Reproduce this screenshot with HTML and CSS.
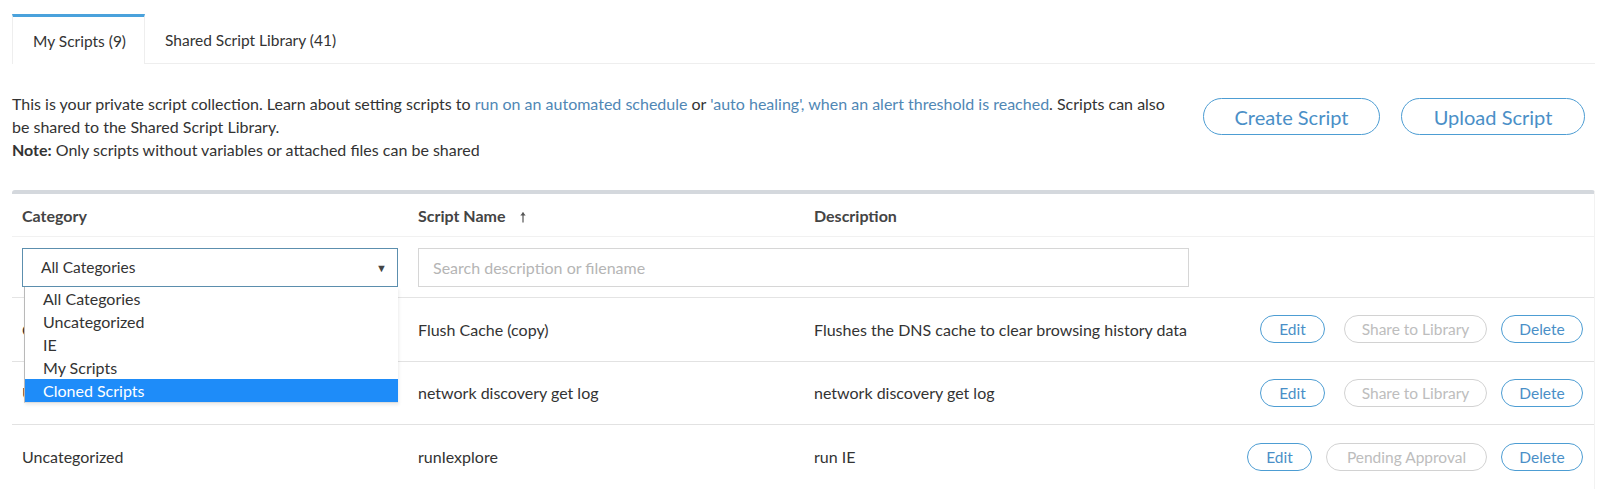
FILE: index.html
```html
<!DOCTYPE html>
<html lang="en">
<head>
<meta charset="utf-8">
<title>Scripts</title>
<link rel="stylesheet" href="styles.css">
</head>
<body>
<div class="page">
  <div class="tabs">
    <div class="tab active">My Scripts (9)</div>
    <div class="tab">Shared Script Library (41)</div>
  </div>

  <div class="intro">
    <div class="intro-text">
      This is your private script collection. Learn about setting scripts to <a href="#">run on an automated schedule</a> or <a href="#">'auto healing', when an alert threshold is reached</a>. Scripts can also<br>
      be shared to the Shared Script Library.<br>
      <b>Note:</b> Only scripts without variables or attached files can be shared
    </div>
    <div class="intro-actions">
      <button class="pill big create">Create Script</button>
      <button class="pill big upload">Upload Script</button>
    </div>
  </div>

  <div class="table">
    <div class="row head">
      <div class="cell">Category</div>
      <div class="cell">Script Name
        <svg class="sort" width="8" height="12" viewBox="0 0 8 12"><path d="M4 1.5V11.5" stroke="#555" stroke-width="1.2" fill="none"/><path d="M1.3 4.5L4 1.2L6.7 4.5Z" fill="#555"/></svg>
      </div>
      <div class="cell">Description</div>
      <div class="cell"></div>
    </div>

    <div class="row filter">
      <div class="cell select-cell">
        <div class="select">
          <span>All Categories</span>
          <span class="caret">&#9660;</span>
        </div>
        <ul class="options">
          <li>All Categories</li>
          <li>Uncategorized</li>
          <li>IE</li>
          <li>My Scripts</li>
          <li class="hl">Cloned Scripts</li>
        </ul>
      </div>
      <div class="cell search-cell">
        <div class="search">Search description or filename</div>
      </div>
    </div>

    <div class="row body">
      <div class="cell">Cloned Scripts</div>
      <div class="cell">Flush Cache (copy)</div>
      <div class="cell">Flushes the DNS cache to clear browsing history data</div>
      <div class="cell actions">
        <button class="pill sm edit wide-gap">Edit</button>
        <button class="pill sm off share">Share to Library</button>
        <button class="pill sm del">Delete</button>
      </div>
    </div>

    <div class="row body">
      <div class="cell">Uncategorized</div>
      <div class="cell">network discovery get log</div>
      <div class="cell">network discovery get log</div>
      <div class="cell actions">
        <button class="pill sm edit wide-gap">Edit</button>
        <button class="pill sm off share">Share to Library</button>
        <button class="pill sm del">Delete</button>
      </div>
    </div>

    <div class="row body last">
      <div class="cell">Uncategorized</div>
      <div class="cell">runIexplore</div>
      <div class="cell">run IE</div>
      <div class="cell actions">
        <button class="pill sm edit">Edit</button>
        <button class="pill sm off pending">Pending Approval</button>
        <button class="pill sm del">Delete</button>
      </div>
    </div>
  </div>
</div>
</body>
</html>
```

FILE: styles.css
```css
* { box-sizing: border-box; }
html, body { margin: 0; padding: 0; background: #fff; }
body {
  font-family: Lato, "Open Sans", sans-serif;
  color: #333;
  font-size: 16px;
}
.page {
  padding: 14px 8px 0 12px;
  height: 490px;
  overflow: hidden;
}
.tabs {
  display: flex;
  border-bottom: 1px solid #eee;
  height: 50px;
}
.tab {
  padding: 0 20px;
  display: flex;
  align-items: center;
  font-size: 15.5px;
  color: #333;
  white-space: nowrap;
  border-top: 3px solid transparent;
}
.tab.active {
  padding: 0 18px 0 20px;
  border-top-color: #4aa2dc;
  border-left: 1px solid #eee;
  border-right: 1px solid #eee;
  margin-bottom: -1px;
  background: #fff;
}
.intro {
  display: flex;
  align-items: flex-start;
  margin-top: 28px;
  height: 98px;
}
.intro-text {
  flex: 1;
  line-height: 23px;
  font-size: 16px;
  white-space: nowrap;
}
.intro-text a { color: #5087b5; text-decoration: none; }
.intro-text b { font-weight: 700; }
.intro-actions {
  display: flex;
  gap: 21px;
  margin-top: 6px;
  margin-right: 10px;
}
.pill {
  font-family: inherit;
  background: #fff;
  border: 1px solid #4d9dd3;
  color: #4a8fc7;
  border-radius: 20px;
  cursor: pointer;
  padding: 0;
}
.pill.big {
  height: 37px;
  font-size: 20px;
}
.pill.big.create { width: 177px; }
.pill.big.upload { width: 184px; }
.table {
  border-top: 4px solid #d4d8dd;
  border-radius: 3px 3px 0 0;
  border-right: 1px solid #f2f2f2;
}
.row {
  display: grid;
  grid-template-columns: 396px 396px 1fr auto;
  align-items: center;
}
.cell { padding-left: 10px; }
.row.head {
  height: 43px;
  font-weight: 700;
  font-size: 16px;
  color: #444;
  border-bottom: 1px solid #f1f1f1;
}
.sort { margin-left: 10px; vertical-align: -1px; }
.row.filter {
  height: 61px;
  border-bottom: 1px solid #e4e4e4;
}
.select-cell { position: relative; }
.select {
  width: 376px;
  height: 39px;
  border: 1px solid #5c8fae;
  display: flex;
  align-items: center;
  justify-content: space-between;
  padding: 0 10px 0 18px;
  font-size: 15.5px;
  color: #333;
}
.caret { font-size: 11px; color: #444; }
.options {
  position: absolute;
  z-index: 5;
  left: 12px;
  top: 39px;
  width: 374px;
  margin: 0;
  padding: 0;
  list-style: none;
  background: #fff;
  border-left: 1px solid #b9b9b9;
  border-bottom: 1px solid #ddd;
  box-shadow: 1px 2px 3px rgba(0,0,0,0.08);
}
.options li {
  height: 23px;
  line-height: 23px;
  padding-left: 18px;
  font-size: 16px;
  color: #333;
}
.options li.hl { background: #1e8cf9; color: #fff; }
.search-cell { grid-column: 2 / 4; }
.search {
  width: 771px;
  height: 39px;
  border: 1px solid #d6d6d6;
  display: flex;
  align-items: center;
  padding-left: 14px;
  color: #b5b5b5;
  font-size: 16px;
}
.row.body {
  height: 63.5px;
  border-bottom: 1px solid #e2e2e2;
  font-size: 16px;
}
.row.body.last { border-bottom: none; }
.actions {
  display: flex;
  gap: 14px;
  padding-right: 11px;
}
.pill.sm {
  height: 28px;
  font-size: 15.5px;
}
.pill.sm.edit { width: 65px; }
.pill.sm.edit.wide-gap { margin-right: 5px; }
.pill.sm.share { width: 143px; }
.pill.sm.pending { width: 161px; }
.pill.sm.del { width: 82px; }
.pill.sm.off {
  border-color: #d2d2d2;
  color: #bdbdbd;
}
```
